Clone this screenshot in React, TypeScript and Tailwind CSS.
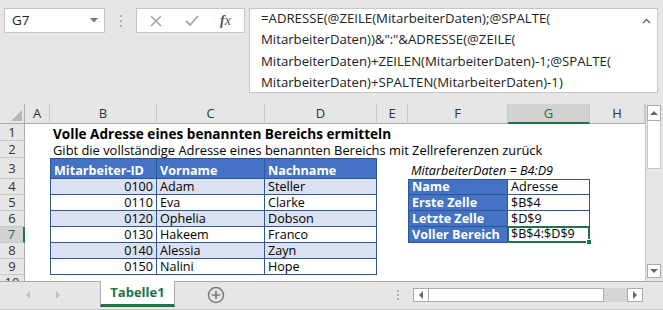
import React from "react";

const FONT = { fontFamily: '"Open Sans", "Noto Sans", sans-serif' };

type Cell = {
  text?: string;
  cls?: string;
  wrap?: string;
  selected?: boolean;
};

const BLUE_HDR = "bg-[#4472c4] text-white font-bold";
const BORD = "border-[#2f5597]";

function buildCells(): Record<string, Cell> {
  const c: Record<string, Cell> = {};
  c["B1"] = { text: "Volle Adresse eines benannten Bereichs ermitteln", cls: "font-bold text-[13.6px]" };
  c["B2"] = { text: "Gibt die vollständige Adresse eines benannten Bereichs mit Zellreferenzen zurück", cls: "text-[12.9px]" };
  c["B3"] = { text: "Mitarbeiter-ID", wrap: `${BLUE_HDR} border-l border-t border-r border-b ${BORD}` };
  c["C3"] = { text: "Vorname", wrap: `${BLUE_HDR} border-t border-r border-b ${BORD}` };
  c["D3"] = { text: "Nachname", wrap: `${BLUE_HDR} border-t border-r border-b ${BORD}` };
  c["F3"] = { text: "MitarbeiterDaten = B4:D9", cls: "italic pb-[1px]" };
  const data = [
    ["0100", "Adam", "Steller"],
    ["0110", "Eva", "Clarke"],
    ["0120", "Ophelia", "Dobson"],
    ["0130", "Hakeem", "Franco"],
    ["0140", "Alessia", "Zayn"],
    ["0150", "Nalini", "Hope"],
  ];
  data.forEach((d, i) => {
    const r = i + 4;
    const bg = i % 2 === 0 ? "bg-[#d9e1f2]" : "bg-white";
    c[`B${r}`] = { text: d[0], wrap: `${bg} border-l border-r border-b ${BORD} justify-end` };
    c[`C${r}`] = { text: d[1], wrap: `${bg} border-r border-b ${BORD}` };
    c[`D${r}`] = { text: d[2], wrap: `${bg} border-r border-b ${BORD}` };
  });
  const t2 = [
    ["Name", "Adresse"],
    ["Erste Zelle", "$B$4"],
    ["Letzte Zelle", "$D$9"],
    ["Voller Bereich", "$B$4:$D$9"],
  ];
  t2.forEach((d, i) => {
    const r = i + 4;
    const top = i === 0 ? "border-t" : "";
    c[`F${r}`] = { text: d[0], wrap: `${BLUE_HDR} border-l border-r border-b ${top} ${BORD}` };
    c[`G${r}`] = { text: d[1], wrap: `bg-white border-r border-b ${top} ${BORD}` };
  });
  c["G7"] = { text: "$B$4:$D$9", selected: true };
  return c;
}

const cols = ["A", "B", "C", "D", "E", "F", "G", "H"];
const rows = [1, 2, 3, 4, 5, 6, 7, 8, 9, 10];

function Triangle({ dir, className }: { dir: "up" | "down" | "left" | "right"; className?: string }) {
  const pts =
    dir === "up"
      ? "0,5 4,1 8,5"
      : dir === "down"
      ? "0,1 8,1 4,5"
      : dir === "left"
      ? "5,0 5,8 1,4"
      : "1,0 1,8 5,4";
  const w = dir === "up" || dir === "down" ? 8 : 6;
  const h = dir === "up" || dir === "down" ? 6 : 8;
  return (
    <svg width={w} height={h} viewBox={`0 0 ${w} ${h}`} className={className}>
      <polygon points={pts} fill="currentColor" />
    </svg>
  );
}

function FormulaBar() {
  return (
    <div className="flex items-start h-[104px] pt-[8px] bg-[#e6e6e6]">
      <div className="ml-[4px] w-[101px] h-[25px] bg-white border border-[#c6c6c6] flex items-center justify-between pl-[7px] pr-[6px]">
        <span className="text-[13.5px] text-[#222]">G7</span>
        <svg width="8" height="5" viewBox="0 0 8 5" className="text-[#777]">
          <polygon points="0,0 8,0 4,4.5" fill="currentColor" />
        </svg>
      </div>
      <div className="w-[31px] h-[25px] flex flex-col items-center justify-center gap-[3px]">
        <div className="w-[2px] h-[2px] bg-[#b0b0b0]" />
        <div className="w-[2px] h-[2px] bg-[#b0b0b0]" />
        <div className="w-[2px] h-[2px] bg-[#b0b0b0]" />
      </div>
      <div className="w-[109px] h-[25px] bg-white border border-[#c6c6c6] flex items-center">
        <svg width="12" height="12" viewBox="0 0 12 12" className="ml-[13px]">
          <path d="M1 1 L11 11 M11 1 L1 11" stroke="#a6a6a6" strokeWidth="1.6" />
        </svg>
        <svg width="14" height="12" viewBox="0 0 14 12" className="ml-[23px]">
          <path d="M1 6 L5 10 L13 1" stroke="#a6a6a6" strokeWidth="1.8" fill="none" />
        </svg>
        <span
          className="ml-[21px] text-[14px] italic text-[#555] leading-none"
          style={{ fontFamily: '"Liberation Serif", "DejaVu Serif", serif' }}
        >
          <span className="font-bold">f</span>x
        </span>
      </div>
      <div className="ml-[4px] w-[409px] h-[85px] bg-white border border-[#c6c6c6] flex justify-between">
        <div className="pl-[11px] text-[13.2px] leading-[21.3px] text-[#222] -mt-[1px]">
          <div>=ADRESSE(@ZEILE(MitarbeiterDaten);@SPALTE(</div>
          <div>MitarbeiterDaten))&amp;":"&amp;ADRESSE(@ZEILE(</div>
          <div>MitarbeiterDaten)+ZEILEN(MitarbeiterDaten)-1;@SPALTE(</div>
          <div>MitarbeiterDaten)+SPALTEN(MitarbeiterDaten)-1)</div>
        </div>
        <svg width="9" height="6" viewBox="0 0 9 6" className="mr-[6px] mt-[9px]">
          <path d="M1 5 L4.5 1.5 L8 5" stroke="#666" strokeWidth="1.4" fill="none" />
        </svg>
      </div>
    </div>
  );
}

function Sheet() {
  const cells = buildCells();
  const children: React.ReactNode[] = [];
  children.push(
    <div key="corner" className="bg-[#e6e6e6] border-r border-b border-[#ababab] relative">
      <svg width="11" height="11" viewBox="0 0 11 11" className="absolute right-[2px] bottom-[2px]">
        <polygon points="11,0 11,11 0,11" fill="#b8b8b8" />
      </svg>
    </div>
  );
  cols.forEach((col) => {
    const sel = col === "G";
    children.push(
      <div
        key={`h${col}`}
        className={`flex items-center justify-center text-[13px] leading-none border-r border-[#c8c8c8] ${
          sel
            ? "bg-[#d2d2d2] text-[#217346] border-b-2 border-b-[#217346]"
            : "bg-[#e6e6e6] text-[#333] border-b border-b-[#ababab]"
        }`}
      >
        {col}
      </div>
    );
  });
  rows.forEach((r) => {
    const sel = r === 7;
    children.push(
      <div
        key={`r${r}`}
        className={`flex items-center justify-center text-[13px] leading-none border-b border-[#c8c8c8] ${
          sel
            ? "bg-[#d2d2d2] text-[#217346] border-r-2 border-r-[#217346]"
            : "bg-[#e6e6e6] text-[#333] border-r border-r-[#ababab]"
        }`}
      >
        {r}
      </div>
    );
    cols.forEach((col) => {
      const key = `${col}${r}`;
      const cell = cells[key];
      if (!cell) {
        children.push(<div key={key} />);
        return;
      }
      if (cell.selected) {
        children.push(
          <div
            key={key}
            className="relative z-10 -ml-[1px] -mt-[1px] border-2 border-[#217346] bg-white flex items-end px-[2px] text-[12.6px] leading-[15px] text-black whitespace-nowrap"
          >
            {cell.text}
            <div className="absolute -right-[4px] -bottom-[4px] w-[6px] h-[6px] bg-[#217346] border border-white" />
          </div>
        );
        return;
      }
      children.push(
        <div
          key={key}
          className={`flex items-end px-[3px] text-[12.6px] leading-[15px] text-black whitespace-nowrap ${cell.wrap ?? ""} ${
            cell.cls ?? ""
          }`}
        >
          {cell.text}
        </div>
      );
    });
  });

  return (
    <div className="flex h-[177px] bg-[#e6e6e6]">
      <div className="w-[645px] h-[177px] overflow-hidden bg-white">
        <div className="grid grid-cols-[25px_25px_107px_108px_112px_31px_100px_82px_55px] grid-rows-[20px_17px_17px_21px_16px_16px_16px_16px_16px_16px_16px] bg-white">
          {children}
        </div>
      </div>
      <div className="w-[18px] h-[177px] flex flex-col items-start pl-[1px] pt-[1px] bg-[#e6e6e6] border-l border-[#c6c6c6]">
        <div className="w-[14px] h-[16px] bg-white border border-[#ababab] flex items-center justify-center text-[#666]">
          <Triangle dir="up" />
        </div>
        <div className="w-[14px] h-[48px] bg-white border-x border-b border-[#c6c6c6]" />
        <div className="flex-1" />
        <div className="w-[14px] h-[14px] mb-[3px] bg-white border border-[#ababab] flex items-center justify-center text-[#666]">
          <Triangle dir="down" />
        </div>
      </div>
    </div>
  );
}

function TabBar() {
  return (
    <div className="flex h-[29px] bg-[#e6e6e6] border-b border-[#c6c6c6]">
      <div className="w-[100px] h-[27px] border-t border-[#ababab] flex items-center">
        <Triangle dir="left" className="ml-[25px] text-[#c0c0c0]" />
        <Triangle dir="right" className="ml-[24px] text-[#c0c0c0]" />
      </div>
      <div className="w-[75px] h-[26px] bg-white border-x border-[#ababab] border-b-[3px] border-b-[#217346] flex items-center justify-center">
        <span className="text-[13px] font-bold text-[#217346]">Tabelle1</span>
      </div>
      <div className="flex-1 h-[27px] border-t border-[#ababab] flex items-center">
        <svg width="18" height="18" viewBox="0 0 18 18" className="ml-[32px]">
          <circle cx="9" cy="9" r="7.5" stroke="#7a7a7a" strokeWidth="1.5" fill="none" />
          <path d="M9 4.8 V13.2 M4.8 9 H13.2" stroke="#7a7a7a" strokeWidth="1.6" />
        </svg>
        <div className="ml-[172px] flex flex-col gap-[2px]">
          <div className="w-[2px] h-[2px] bg-[#b0b0b0]" />
          <div className="w-[2px] h-[2px] bg-[#b0b0b0]" />
          <div className="w-[2px] h-[2px] bg-[#b0b0b0]" />
        </div>
        <div className="ml-[14px] w-[230px] h-[14px] flex bg-[#d6d6d6]">
          <div className="w-[16px] h-[14px] bg-white border border-[#ababab] flex items-center justify-center text-[#666]">
            <Triangle dir="left" />
          </div>
          <div className="w-[175px] h-[14px] bg-white border-y border-r border-[#ababab]" />
          <div className="flex-1" />
          <div className="w-[16px] h-[14px] bg-white border border-[#ababab] flex items-center justify-center text-[#666]">
            <Triangle dir="right" />
          </div>
        </div>
      </div>
    </div>
  );
}

export default function App() {
  return (
    <div className="w-[663px] h-[310px] overflow-hidden bg-[#e6e6e6]" style={FONT}>
      <FormulaBar />
      <Sheet />
      <TabBar />
    </div>
  );
}
